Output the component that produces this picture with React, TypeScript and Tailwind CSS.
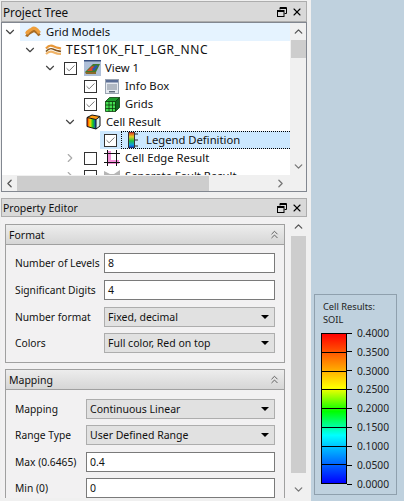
import React from 'react';
import { ChevronDown, ChevronRight, ChevronLeft, ChevronUp, ChevronsUp, Check, X } from 'lucide-react';

class FieldProps {
    label: string;
    value: string;
    labelWidth: string;
    gap: string;
}

const FieldInput = ({ label, value, labelWidth, gap }: FieldProps) => (
    <div className={`flex items-center h-[20px] ${gap}`}>
        <div className={`${labelWidth} shrink-0 pl-[9px] text-[#111] text-[10.25px] whitespace-nowrap`}>{label}</div>
        <div className="flex-1 h-[20px] bg-white border border-[#7a7a7a] pl-[3px] leading-[19px] text-[#111] text-[10.5px]">{value}</div>
    </div>
);

const FieldSelect = ({ label, value, labelWidth, gap }: FieldProps) => (
    <div className={`flex items-center h-[20px] ${gap}`}>
        <div className={`${labelWidth} shrink-0 pl-[9px] text-[#111] text-[10.25px] whitespace-nowrap`}>{label}</div>
        <div className="flex-1 h-[20px] bg-[#e1e1e1] border border-[#adadad] pl-[3px] pr-[5px] flex items-center justify-between text-[#111] text-[10.5px]">
            <span>{value}</span>
            <span className="w-0 h-0 border-x-[4px] border-x-transparent border-t-[4px] border-t-black" />
        </div>
    </div>
);

const GroupBox = ({ title, children, className }: { title: string; children: React.ReactNode; className: string }) => (
    <div className={`border border-[#a0a0a0] ${className}`}>
        <div className="h-[20px] flex items-center justify-between pl-[3px] pr-[3px] bg-gradient-to-b from-[#ededed] to-[#d6d6d6] border-b border-[#a0a0a0] text-[#111] text-[10.5px]">
            <span>{title}</span>
            <ChevronsUp size={13} strokeWidth={1.5} className="text-[#444]" />
        </div>
        {children}
    </div>
);

const TitleBar = ({ title, className }: { title: string; className: string }) => (
    <div className={`${className} shrink-0 flex items-center justify-between pl-[1px] pr-[2px] bg-[#d9d9d9] border border-[#adadad] text-[#111]`}>
        <span>{title}</span>
        <div className="flex items-center gap-[4px]">
            <svg width="10" height="10" viewBox="0 0 10 10" fill="none" stroke="black" strokeWidth="1">
                <path d="M3 2.5V0.5H9.5V6.5H7.5" />
                <path d="M3 1.5H9.5" />
                <rect x="0.5" y="3.5" width="6.5" height="6" />
                <path d="M0.5 4.5H7" />
            </svg>
            <X size={12} strokeWidth={2.2} className="text-black mr-[1px]" />
        </div>
    </div>
);

const Box = ({ checked }: { checked?: boolean }) => (
    <span className="w-[13px] h-[13px] shrink-0 border border-[#333] bg-white flex items-center justify-center">
        {checked && <Check size={11} strokeWidth={1.6} className="text-[#444]" />}
    </span>
);

const GridModelIcon = () => (
    <svg width="16" height="13" viewBox="0 0 16 13" fill="none">
        <path d="M1.5 10.5 C3 7 5 7 7 5.5 C9 4 11 4.5 14.5 9.5" stroke="#a86c24" strokeWidth="3" />
        <path d="M1.5 8 C3 4.5 5 4.5 7 3 C9 1.5 11 2 14.5 7" stroke="#ee9f3c" strokeWidth="3.4" />
    </svg>
);

const CaseIcon = () => (
    <svg width="17" height="12" viewBox="0 0 17 12" fill="none">
        <path d="M1 4.5 C4 1 6 1 9 2.5 C12 4 14 4 16 4.5" stroke="#e8983a" strokeWidth="2.2" />
        <path d="M1 7.5 C4 4 6 4 9 5.5 C12 7 14 7 16 7.5" stroke="#7d5220" strokeWidth="1.6" />
        <path d="M1 10 C4 7 6 7 9 8.5 C12 10 14 10 16 10" stroke="#f0b468" strokeWidth="2.2" />
    </svg>
);

const ViewIcon = () => (
    <svg width="17" height="16" viewBox="0 0 17 16">
        <rect width="17" height="16" fill="#aebfd8" />
        <rect width="17" height="1.5" fill="#39507f" />
        <path d="M1 12 L9 4 L16 4 L12 12Z" fill="#3f7a2e" />
        <path d="M3 11 L8 6 L11 7 L8 11Z" fill="#d7482a" />
        <path d="M8 9 L12 5 L14 6 L10 11Z" fill="#2b55b5" />
        <path d="M1 12 L12 12 L12 14 L2 14Z" fill="#8a6a2a" />
    </svg>
);

const InfoIcon = () => (
    <svg width="14" height="15" viewBox="0 0 14 15">
        <rect x="0.5" y="0.5" width="13" height="14" fill="#e6eaf0" stroke="#9aa4b2" />
        <rect x="1" y="1" width="12" height="2.5" fill="#5c6f96" />
        <path d="M2 6H12M2 8H12M2 10H12" stroke="#7c8795" strokeWidth="1" />
        <rect x="4" y="12" width="6" height="1.5" fill="#5f6b7a" />
    </svg>
);

const GridsIcon = () => (
    <svg width="15" height="15" viewBox="0 0 15 15" stroke="#0c3d0c" strokeWidth="0.8">
        <path d="M0.5 4.5H10.5V14.5H0.5Z" fill="#45e052" />
        <path d="M0.5 4.5L4.5 0.5H14.5L10.5 4.5Z" fill="#1c9a2c" />
        <path d="M10.5 4.5L14.5 0.5V10.5L10.5 14.5Z" fill="#0f6a1f" />
        <path d="M4 4.5V14.5M7.5 4.5V14.5M0.5 8H10.5M0.5 11.5H10.5" fill="none" />
    </svg>
);

const CellResultIcon = () => (
    <svg width="15" height="16" viewBox="0 0 15 16">
        <defs>
            <linearGradient id="cellFront" x1="0" y1="0" x2="1" y2="0">
                <stop offset="0" stopColor="#ff1a00" />
                <stop offset="0.35" stopColor="#ffd800" />
                <stop offset="0.65" stopColor="#10c820" />
                <stop offset="1" stopColor="#1040e0" />
            </linearGradient>
        </defs>
        <path d="M1 3.5L10 5.5V15L1 12.5Z" fill="url(#cellFront)" />
        <path d="M1 3.5L6 1L14 2.5L10 5.5Z" fill="#ff9a10" />
        <path d="M10 5.5L14 2.5V12L10 15Z" fill="#d8f0f0" />
        <path d="M1 3.5L6 1L14 2.5V12L10 15L1 12.5ZM1 3.5L10 5.5L14 2.5M10 5.5V15" stroke="#111" strokeWidth="1" fill="none" />
    </svg>
);

const LegendIcon = () => (
    <svg width="10" height="16" viewBox="0 0 10 16">
        <defs>
            <linearGradient id="legendBar" x1="0" y1="0" x2="0" y2="1">
                <stop offset="0" stopColor="#e02020" />
                <stop offset="0.3" stopColor="#e0d020" />
                <stop offset="0.55" stopColor="#20c040" />
                <stop offset="0.8" stopColor="#10a0e0" />
                <stop offset="1" stopColor="#1020c0" />
            </linearGradient>
        </defs>
        <rect x="0.5" y="0" width="6" height="16" fill="url(#legendBar)" stroke="#333" strokeWidth="1" />
        <path d="M7 2H10M7 8H10M7 14H10" stroke="#222" strokeWidth="1" />
    </svg>
);

const EdgeIcon = () => (
    <svg width="16" height="16" viewBox="0 0 16 16">
        <path d="M3 1H7V10H15V14H3Z" fill="#f490d8" />
        <path d="M3.5 0V16M12.5 0V16M0 3.5H16M0 12.5H16" stroke="#111" strokeWidth="1" />
    </svg>
);

const FaultIcon = () => (
    <svg width="16" height="14" viewBox="0 0 16 14">
        <path d="M0 2L6 5L10 5L16 1V12L0 12Z" fill="#b5b5b5" />
    </svg>
);

type Row = {
    level: number;
    label: string;
    chevron?: 'down' | 'right';
    checked?: boolean;
    hasBox?: boolean;
    icon: React.ReactNode;
    labelClass?: string;
};

const rows: Row[] = [
    { level: 0, label: 'Grid Models', chevron: 'down', icon: <GridModelIcon /> },
    { level: 1, label: 'TEST10K_FLT_LGR_NNC', chevron: 'down', icon: <CaseIcon />, labelClass: 'text-[12px] tracking-[0.6px]' },
    { level: 2, label: 'View 1', chevron: 'down', hasBox: true, checked: true, icon: <ViewIcon /> },
    { level: 3, label: 'Info Box', hasBox: true, checked: true, icon: <InfoIcon /> },
    { level: 3, label: 'Grids', hasBox: true, checked: true, icon: <GridsIcon /> },
    { level: 3, label: 'Cell Result', chevron: 'down', icon: <CellResultIcon /> },
    { level: 4, label: 'Legend Definition', hasBox: true, checked: true, icon: <LegendIcon /> },
    { level: 3, label: 'Cell Edge Result', chevron: 'right', hasBox: true, icon: <EdgeIcon /> },
    { level: 3, label: 'Separate Fault Result', chevron: 'right', hasBox: true, icon: <FaultIcon /> },
];

const TreeRow = ({ row, index }: { row: Row; index: number }) => {
    const hovered = index === 0;
    const selected = index === 6;
    return (
        <div className="flex items-center h-[18px] shrink-0 text-[#111]" style={{ paddingLeft: row.level * 20 }}>
            <span className="w-[20px] -ml-[2px] shrink-0 flex items-center justify-center">
                {row.chevron === 'down' && <ChevronDown size={14} strokeWidth={2} className="text-[#444]" />}
                {row.chevron === 'right' && <ChevronRight size={14} strokeWidth={2} className="text-[#aaa]" />}
            </span>
            <div className={`flex flex-1 items-center h-full ${hovered ? 'bg-[#e5f3ff]' : ''} ${selected ? 'bg-[#cce8ff]' : ''}`}>
                {row.hasBox ? (
                    <span className="w-[21px] shrink-0 flex pl-[4px]">
                        <Box checked={row.checked} />
                    </span>
                ) : (
                    <span className="w-[2px] shrink-0" />
                )}
                <div className={`flex flex-1 items-center h-full ${selected ? 'border-y border-l border-dotted border-black' : ''}`}>
                    <span className="w-[22px] shrink-0 flex items-center justify-center">{row.icon}</span>
                    <span className={`pl-[2px] whitespace-nowrap ${row.labelClass ?? ''}`}>{row.label}</span>
                </div>
            </div>
        </div>
    );
};

const legendLabels = ['0.4000', '0.3500', '0.3000', '0.2500', '0.2000', '0.1500', '0.1000', '0.0500', '0.0000'];

export default function App() {
    return (
        <div
            className="w-[404px] h-[501px] overflow-hidden bg-[#bfd1de] flex text-[11.25px] leading-[16px]"
            style={{ fontFamily: '"Noto Sans", sans-serif' }}
        >
            <div className="w-[311px] h-full shrink-0 bg-[#f0f0f0] flex flex-col pl-[1px] pr-[4px] pt-[1px]">
                <TitleBar title="Project Tree" className="h-[21px] text-[11.75px]" />
                <div className="h-[170px] shrink-0 bg-white border border-[#828790] flex flex-col">
                    <div className="flex flex-1 min-h-0">
                        <div className="flex-1 min-w-0 overflow-hidden flex flex-col">
                            {rows.map((row, i) => (
                                <TreeRow key={row.label} row={row} index={i} />
                            ))}
                        </div>
                        <div className="w-[16px] shrink-0 bg-[#f0f0f0] flex flex-col items-center">
                            <ChevronUp size={13} strokeWidth={2.4} className="text-[#555] mt-[2px] mb-[2px]" />
                            <div className="w-[15px] h-[18px] bg-[#cdcdcd]" />
                            <div className="flex-1" />
                            <ChevronDown size={13} strokeWidth={2.4} className="text-[#777] mb-[2px]" />
                        </div>
                    </div>
                    <div className="h-[16px] shrink-0 bg-[#f0f0f0] flex items-center">
                        <ChevronLeft size={13} strokeWidth={2.4} className="text-[#555] mx-[1px] shrink-0" />
                        <div className="w-[192px] h-[15px] bg-[#cdcdcd]" />
                        <div className="flex-1" />
                        <ChevronRight size={13} strokeWidth={2.4} className="text-[#777] mr-[19px] shrink-0" />
                    </div>
                </div>
                <div className="mt-[6px]">
                    <TitleBar title="Property Editor" className="h-[19px] text-[10.5px]" />
                </div>
                <div className="h-[281px] shrink-0 flex overflow-hidden">
                    <div className="flex-1 min-w-0 pl-[4px] pr-[5px] pt-[7px] flex flex-col gap-[6px] bg-[#f2f1f2]">
                        <GroupBox title="Format" className="h-[139px] shrink-0">
                            <div className="flex flex-col pr-[9px] pt-[8px]">
                                <FieldInput label="Number of Levels" value="8" labelWidth="w-[98px]" gap="" />
                                <FieldInput label="Significant Digits" value="4" labelWidth="w-[98px]" gap="mt-[7px]" />
                                <FieldSelect label="Number format" value="Fixed, decimal" labelWidth="w-[98px]" gap="mt-[7px]" />
                                <FieldSelect label="Colors" value="Full color, Red on top" labelWidth="w-[98px]" gap="mt-[6px]" />
                            </div>
                        </GroupBox>
                        <GroupBox title="Mapping" className="flex-1 min-h-0 !border-b-0">
                            <div className="flex flex-col pr-[9px] pt-[9px]">
                                <FieldSelect label="Mapping" value="Continuous Linear" labelWidth="w-[80px]" gap="" />
                                <FieldSelect label="Range Type" value="User Defined Range" labelWidth="w-[80px]" gap="mt-[6px]" />
                                <FieldInput label="Max (0.6465)" value="0.4" labelWidth="w-[80px]" gap="mt-[7px]" />
                                <FieldInput label="Min (0)" value="0" labelWidth="w-[80px]" gap="mt-[6px]" />
                            </div>
                        </GroupBox>
                    </div>
                    <div className="w-[17px] shrink-0 bg-[#f0f0f0] flex flex-col items-center">
                        <ChevronUp size={13} strokeWidth={2.4} className="text-[#555] mt-[3px] mb-[3px]" />
                        <div className="w-[15px] h-[237px] bg-[#cdcdcd]" />
                        <div className="flex-1" />
                        <ChevronDown size={13} strokeWidth={2.4} className="text-[#777] mb-[2px]" />
                    </div>
                </div>
            </div>
            <div className="flex-1 flex flex-col justify-end pl-[3px] pr-[7px] pb-[6px]">
                <div className="h-[201px] border border-[#8fa0ad] pl-[8px] pt-[6px] text-[#222] text-[10.25px] leading-[12.5px]">
                    <div className="text-[9.25px]">Cell Results:</div>
                    <div className="mb-[2px] text-[9.25px]">SOIL</div>
                    <div className="flex h-[160px] -ml-[2px]">
                        <div
                            className="w-[26px] h-[151px] mt-[5px] border border-black flex flex-col"
                            style={{ background: 'linear-gradient(#ff0000 0%, #ffff00 36%, #00ff00 52%, #00ffff 68%, #0000ff 100%)' }}
                        >
                            {[0, 1, 2, 3, 4, 5, 6, 7].map((i) => (
                                <div key={i} className="flex-1 border-b border-black last:border-b-0" />
                            ))}
                        </div>
                        <div className="flex flex-col justify-between h-[161px]">
                            {legendLabels.map((v) => (
                                <div key={v} className="h-[10px] flex items-center">
                                    <span className="w-[5px] h-px bg-black mr-[5px]" />
                                    <span>{v}</span>
                                </div>
                            ))}
                        </div>
                    </div>
                </div>
            </div>
        </div>
    );
}
